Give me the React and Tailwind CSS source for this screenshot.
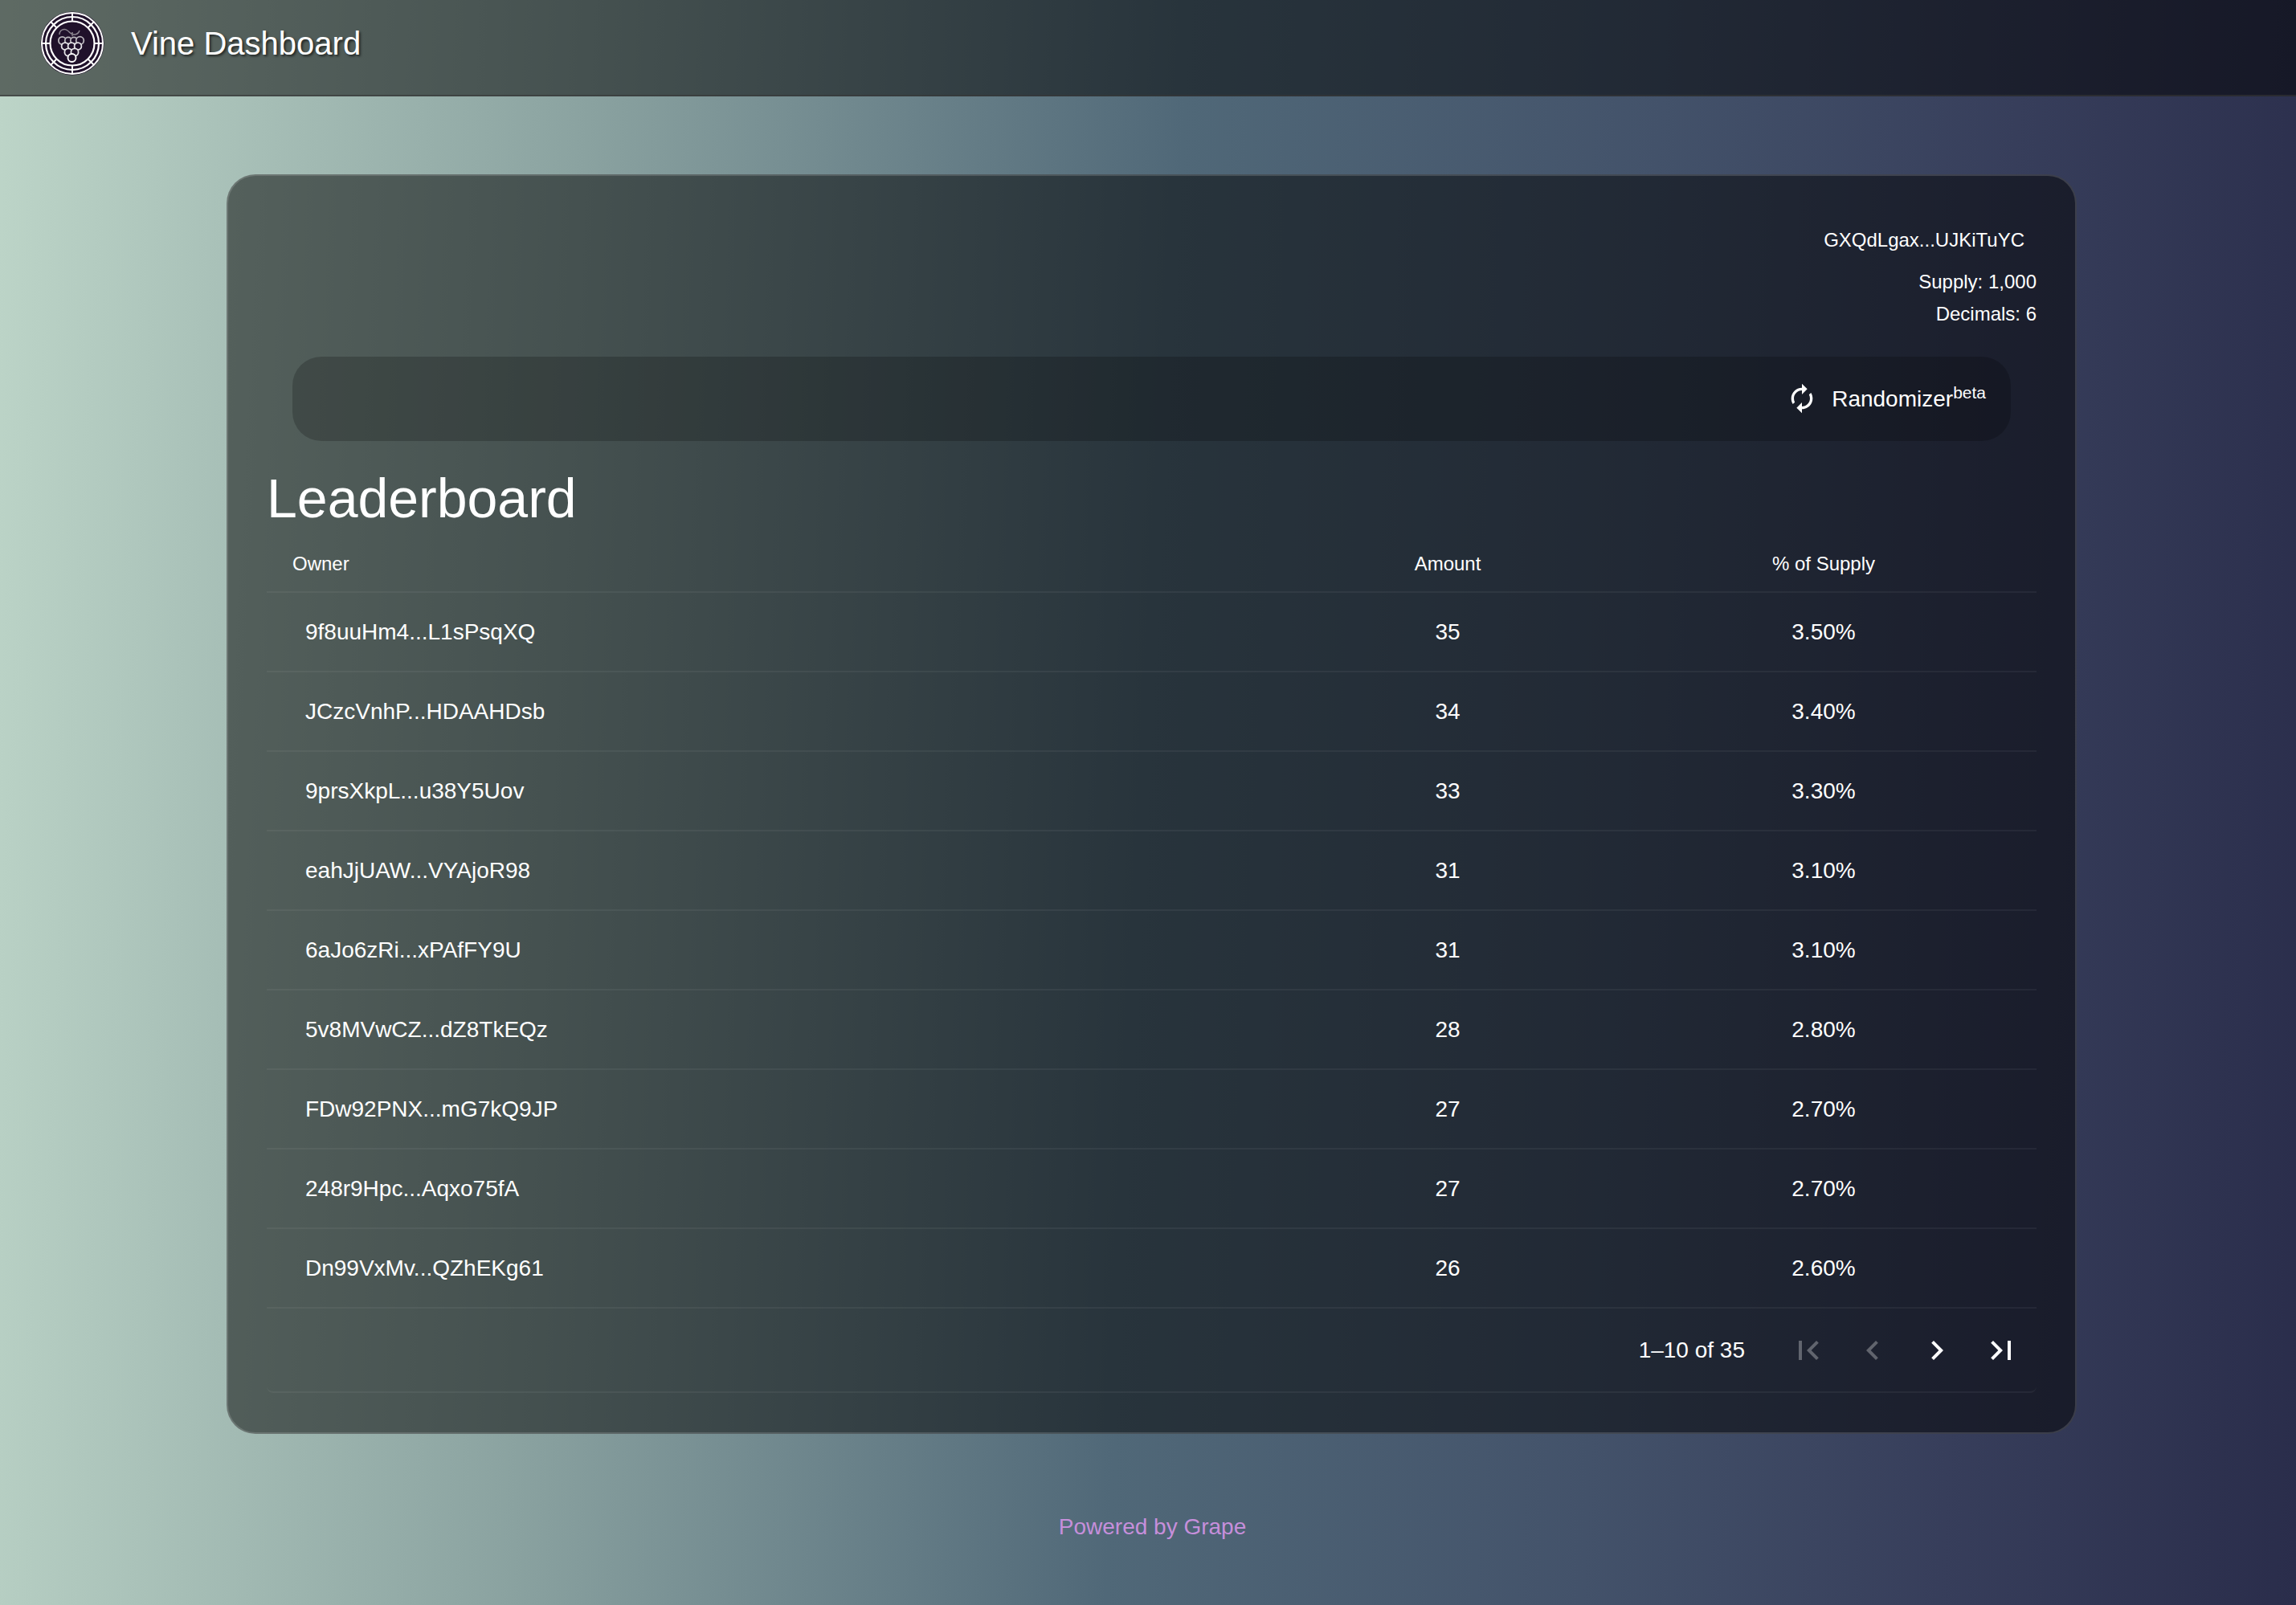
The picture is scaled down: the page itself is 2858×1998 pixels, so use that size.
const holders = [
  { owner: "9f8uuHm4...L1sPsqXQ", amount: 35, pct: "3.50%" },
  { owner: "JCzcVnhP...HDAAHDsb", amount: 34, pct: "3.40%" },
  { owner: "9prsXkpL...u38Y5Uov", amount: 33, pct: "3.30%" },
  { owner: "eahJjUAW...VYAjoR98", amount: 31, pct: "3.10%" },
  { owner: "6aJo6zRi...xPAfFY9U", amount: 31, pct: "3.10%" },
  { owner: "5v8MVwCZ...dZ8TkEQz", amount: 28, pct: "2.80%" },
  { owner: "FDw92PNX...mG7kQ9JP", amount: 27, pct: "2.70%" },
  { owner: "248r9Hpc...Aqxo75fA", amount: 27, pct: "2.70%" },
  { owner: "Dn99VxMv...QZhEKg61", amount: 26, pct: "2.60%" },
];

const Icon = ({ d, className }) => (
  <svg viewBox="0 0 24 24" fill="currentColor" className={className}>
    <path d={d} />
  </svg>
);

const GrapeLogo = () => (
  <svg viewBox="0 0 80 80" className="h-[80px] w-[80px] shrink-0">
    <circle cx="40" cy="40" r="39.5" fill="#20112b" />
    <circle cx="40" cy="40" r="38" fill="none" stroke="#fff" strokeWidth="2" />
    <circle cx="40" cy="40" r="33" fill="none" stroke="#fff" strokeWidth="2.2" />
    {/* little ticks joining the rings */}
    <g stroke="#fff" strokeWidth="2">
      <path d="M40 2.5v10M40 67.5v10M2.5 40h10M67.5 40h10" />
      <path d="M13.5 13.5l7 7M59.5 59.5l7 7M66.5 13.5l-7 7M20.5 59.5l-7 7" />
    </g>
    <circle cx="40" cy="40" r="27.5" fill="#20112b" stroke="#fff" strokeWidth="2.2" />
    {/* vine */}
    <path d="M24 29c0-6 6-8 10-5 3 2 4 5 8 5 3 0 6-2 7-5M40 26v5" fill="none" stroke="#8d8791" strokeWidth="1.5" />
    {/* grapes */}
    <g fill="#20112b" stroke="#b9b6bc" strokeWidth="1.8">
      <circle cx="27.5" cy="36.5" r="4.6" />
      <circle cx="35" cy="36.5" r="4.2" />
      <circle cx="42" cy="36.5" r="4.2" />
      <circle cx="49.5" cy="36.5" r="4.8" />
    </g>
    <g fill="#20112b" stroke="#e4e2e6" strokeWidth="1.8">
      <circle cx="31" cy="43.5" r="4.4" />
      <circle cx="39" cy="43.5" r="4.4" />
      <circle cx="47" cy="43.5" r="4.4" />
      <circle cx="35" cy="51" r="4.6" />
      <circle cx="43" cy="51" r="4.6" />
    </g>
    <circle cx="39.5" cy="58" r="5" fill="#20112b" stroke="#fff" strokeWidth="1.9" />
  </svg>
);

const App = () => {
  return (
    <div className="flex h-[1998px] flex-col bg-[linear-gradient(93deg,#bdd5c8_0%,#8aa2a0_25%,#506878_50%,#43526a_70%,#373e5b_85%,#2a2d4b_100%)] font-['Liberation_Sans',Arial,sans-serif] text-white">
      {/* App bar */}
      <header className="flex h-[120px] shrink-0 items-start border-b-2 border-[#37373799] bg-black/50 pl-[50px] pt-[14px]">
        <GrapeLogo />
        <h1 className="ml-[33px] mt-[18px] text-[40px] leading-[44px] [text-shadow:2px_2px_3px_rgba(0,0,0,0.6)]">
          Vine Dashboard
        </h1>
      </header>

      <main className="ml-[282px] mt-[97px] flex h-[1568px] w-[2303px] flex-col rounded-[36px] border-2 border-white/15 bg-black/50 pl-[48px] pr-[48px]">
        {/* Token info */}
        <div className="flex h-[225px] flex-col items-end pt-[60px] text-[24px] leading-[40px]">
          <div className="mr-[15px] h-[52px] leading-[40px]">GXQdLgax...UJKiTuYC</div>
          <div>Supply: 1,000</div>
          <div>Decimals: 6</div>
        </div>

        <div className="mx-[32px] flex h-[105px] shrink-0 items-center justify-end rounded-[36px] bg-black/20 pr-[31px]">
          <Icon
            className="mb-[2px] h-[40px] w-[40px]"
            d="M12 6v3l4-4-4-4v3c-4.42 0-8 3.58-8 8 0 1.57.46 3.03 1.24 4.26L6.7 14.8c-.45-.83-.7-1.79-.7-2.8 0-3.31 2.69-6 6-6zm6.76 1.74L17.3 9.2c.44.84.7 1.79.7 2.8 0 3.31-2.69 6-6 6v-3l-4 4 4 4v-3c4.42 0 8-3.58 8-8 0-1.57-.46-3.03-1.24-4.26z"
          />
          <span className="ml-[17px] text-[28px] leading-[40px]">
            Randomizer<sup className="top-[-10px] text-[21px] leading-none">beta</sup>
          </span>
        </div>

        <h2 className="mt-[31px] text-[68px] leading-[80px]">Leaderboard</h2>

        {/* Table */}
        <div className="grid h-[78px] shrink-0 grid-cols-[1236px_468px_468px_1fr] items-center border-b-2 border-white/5 pt-[7px] text-[24px]">
          <div className="pl-[32px]">Owner</div>
          <div className="text-center">Amount</div>
          <div className="text-center">% of Supply</div>
        </div>
        {holders.map((row) => (
          <div
            key={row.owner}
            className="grid h-[99px] shrink-0 grid-cols-[1236px_468px_468px_1fr] items-center border-b-2 border-white/5 text-[28px]"
          >
            <div className="pl-[48px]">{row.owner}</div>
            <div className="text-center">{row.amount}</div>
            <div className="text-center">{row.pct}</div>
          </div>
        ))}

        {/* Pagination */}
        <div className="flex h-[105px] shrink-0 items-center justify-end rounded-b-[8px] border-b-2 border-white/5 pr-[20px]">
          <span className="mr-[55px] text-[28px]">1–10 of 35</span>
          <div className="flex gap-[32px]">
            <Icon className="h-[48px] w-[48px] text-white/30" d="M18.41 16.59L13.82 12l4.59-4.59L17 6l-6 6 6 6zM6 6h2v12H6z" />
            <Icon className="h-[48px] w-[48px] text-white/30" d="M15.41 16.59L10.83 12l4.58-4.59L14 6l-6 6 6 6 1.41-1.41z" />
            <Icon className="h-[48px] w-[48px]" d="M8.59 16.59L13.17 12 8.59 7.41 10 6l6 6-6 6-1.41-1.41z" />
            <Icon className="h-[48px] w-[48px]" d="M5.59 7.41L10.18 12l-4.59 4.59L7 18l6-6-6-6zM16 6h2v12h-2z" />
          </div>
        </div>
      </main>

      <footer className="mt-[98px] pl-[11px] text-center text-[28px] leading-[36px] text-[#c68fdb]">Powered by Grape</footer>
    </div>
  );
};

export default App;
